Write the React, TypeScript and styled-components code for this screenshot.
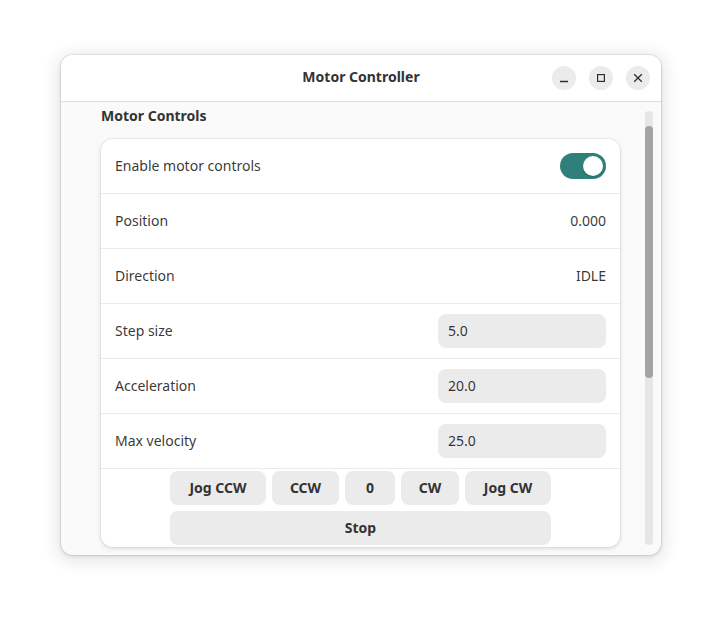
import React from "react";
import styled, { createGlobalStyle } from "styled-components";

const Global = createGlobalStyle`
  html, body { margin: 0; padding: 0; background: #ffffff; }
  body {
    font-family: "Noto Sans", "Open Sans", sans-serif;
    color: rgba(0, 0, 0, 0.8);
  }
  * { box-sizing: border-box; }
`;

const Stage = styled.div`
  width: 722px;
  height: 622px;
  padding: 55px 61px 0;
`;

const Window = styled.div`
  width: 600px;
  height: 500px;
  border-radius: 12px;
  overflow: hidden;
  display: flex;
  flex-direction: column;
  background: #fafafa;
  box-shadow: 0 0 0 1px rgba(0, 0, 0, 0.06), 0 1px 3px 1px rgba(0, 0, 0, 0.08),
    0 3px 16px 5px rgba(0, 0, 0, 0.09);
`;

const HeaderBar = styled.header`
  flex: none;
  height: 47px;
  display: grid;
  grid-template-columns: 1fr auto 1fr;
  align-items: center;
  background: #ffffff;
  border-bottom: 1px solid #dedede;
  padding: 0 11px;
`;

const Title = styled.div`
  grid-column: 2;
  font-size: 14px;
  font-weight: 700;
  color: #333333;
  padding-bottom: 3px;
`;

const Controls = styled.div`
  grid-column: 3;
  justify-self: end;
  display: flex;
  gap: 13px;
  padding-bottom: 1px;
`;

const CtlButton = styled.div`
  width: 24px;
  height: 24px;
  border-radius: 50%;
  background: #ebebeb;
  display: flex;
  align-items: center;
  justify-content: center;
  color: #2e2e2e;
`;

const Content = styled.main`
  flex: 1;
  position: relative;
  overflow: hidden;
`;

const Inner = styled.div`
  padding: 4px 41px 0 40px;
`;

const GroupTitle = styled.h2`
  margin: 0 0 13px;
  font-size: 14px;
  line-height: 20px;
  font-weight: 700;
  color: #333333;
`;

const Card = styled.section`
  background: #ffffff;
  border-radius: 12px;
  overflow: hidden;
  box-shadow: 0 0 0 1px rgba(0, 0, 0, 0.03), 0 1px 3px 1px rgba(0, 0, 0, 0.07),
    0 2px 6px 2px rgba(0, 0, 0, 0.03);
`;

const Row = styled.div`
  height: 55px;
  display: flex;
  align-items: center;
  justify-content: space-between;
  padding: 0 14px;
  border-bottom: 1px solid #ebebeb;
  font-size: 14px;
`;

const Label = styled.span`
  color: rgba(0, 0, 0, 0.8);
  margin-bottom: 2px;
`;

const Value = styled.span`
  color: rgba(0, 0, 0, 0.8);
  margin-bottom: 2px;
`;

const Entry = styled.input`
  width: 168px;
  height: 34px;
  border: none;
  outline: none;
  border-radius: 8px;
  background: #ebebeb;
  padding: 0 10px 2px;
  font: inherit;
  font-size: 14px;
  color: rgba(0, 0, 0, 0.8);
`;

const SwitchTrack = styled.div<{ $on: boolean }>`
  width: 46px;
  height: 26px;
  border-radius: 13px;
  background: ${(p) => (p.$on ? "#2f807b" : "#d6d6d6")};
  display: flex;
  align-items: center;
  justify-content: ${(p) => (p.$on ? "flex-end" : "flex-start")};
  padding: 0 3px;
`;

const SwitchKnob = styled.div`
  width: 20px;
  height: 20px;
  border-radius: 50%;
  background: #ffffff;
  box-shadow: 0 1px 2px rgba(0, 0, 0, 0.2);
`;

const ButtonArea = styled.div`
  padding: 2px 0;
  display: flex;
  flex-direction: column;
  align-items: center;
  gap: 6px;
`;

const ButtonRow = styled.div`
  display: flex;
  gap: 6px;
`;

const Button = styled.button<{ $w: number }>`
  width: ${(p) => p.$w}px;
  height: 34px;
  border: none;
  border-radius: 8px;
  background: #ebebeb;
  font-family: inherit;
  font-size: 14px;
  font-weight: 700;
  color: #333333;
  padding: 0 0 2px;
`;

const ScrollTrack = styled.div`
  position: absolute;
  right: 8px;
  top: 9px;
  bottom: 10px;
  width: 8px;
  border-radius: 4px;
  background: #e6e6e6;
`;

const ScrollThumb = styled.div`
  margin-top: 15px;
  height: 252px;
  border-radius: 4px;
  background: #a3a3a3;
`;

const MinimizeIcon = () => (
  <svg width="24" height="24" viewBox="0 0 24 24" fill="none">
    <path d="M8 15.5h8" stroke="currentColor" strokeWidth="1.3" />
  </svg>
);

const MaximizeIcon = () => (
  <svg width="24" height="24" viewBox="0 0 24 24" fill="none">
    <rect x="8.6" y="8.6" width="6.8" height="6.8" stroke="currentColor" strokeWidth="1.2" />
  </svg>
);

const CloseIcon = () => (
  <svg width="24" height="24" viewBox="0 0 24 24" fill="none">
    <path d="M8.2 8.2l7.6 7.6M15.8 8.2l-7.6 7.6" stroke="currentColor" strokeWidth="1.3" />
  </svg>
);

const params = [
  { label: "Step size", value: "5.0" },
  { label: "Acceleration", value: "20.0" },
  { label: "Max velocity", value: "25.0" },
];

const jogButtons = [
  { label: "Jog CCW", w: 96 },
  { label: "CCW", w: 67 },
  { label: "0", w: 50 },
  { label: "CW", w: 58 },
  { label: "Jog CW", w: 86 },
];

export default function App() {
  return (
    <>
      <Global />
      <Stage>
        <Window>
          <HeaderBar>
            <Title>Motor Controller</Title>
            <Controls>
              <CtlButton>
                <MinimizeIcon />
              </CtlButton>
              <CtlButton>
                <MaximizeIcon />
              </CtlButton>
              <CtlButton>
                <CloseIcon />
              </CtlButton>
            </Controls>
          </HeaderBar>
          <Content>
            <Inner>
              <GroupTitle>Motor Controls</GroupTitle>
              <Card>
                <Row>
                  <Label>Enable motor controls</Label>
                  <SwitchTrack $on>
                    <SwitchKnob />
                  </SwitchTrack>
                </Row>
                <Row>
                  <Label>Position</Label>
                  <Value>0.000</Value>
                </Row>
                <Row>
                  <Label>Direction</Label>
                  <Value>IDLE</Value>
                </Row>
                {params.map((p) => (
                  <Row key={p.label}>
                    <Label>{p.label}</Label>
                    <Entry defaultValue={p.value} readOnly />
                  </Row>
                ))}
                <ButtonArea>
                  <ButtonRow>
                    {jogButtons.map((b) => (
                      <Button key={b.label} $w={b.w}>
                        {b.label}
                      </Button>
                    ))}
                  </ButtonRow>
                  <Button $w={381}>Stop</Button>
                </ButtonArea>
              </Card>
            </Inner>
            <ScrollTrack>
              <ScrollThumb />
            </ScrollTrack>
          </Content>
        </Window>
      </Stage>
    </>
  );
}
